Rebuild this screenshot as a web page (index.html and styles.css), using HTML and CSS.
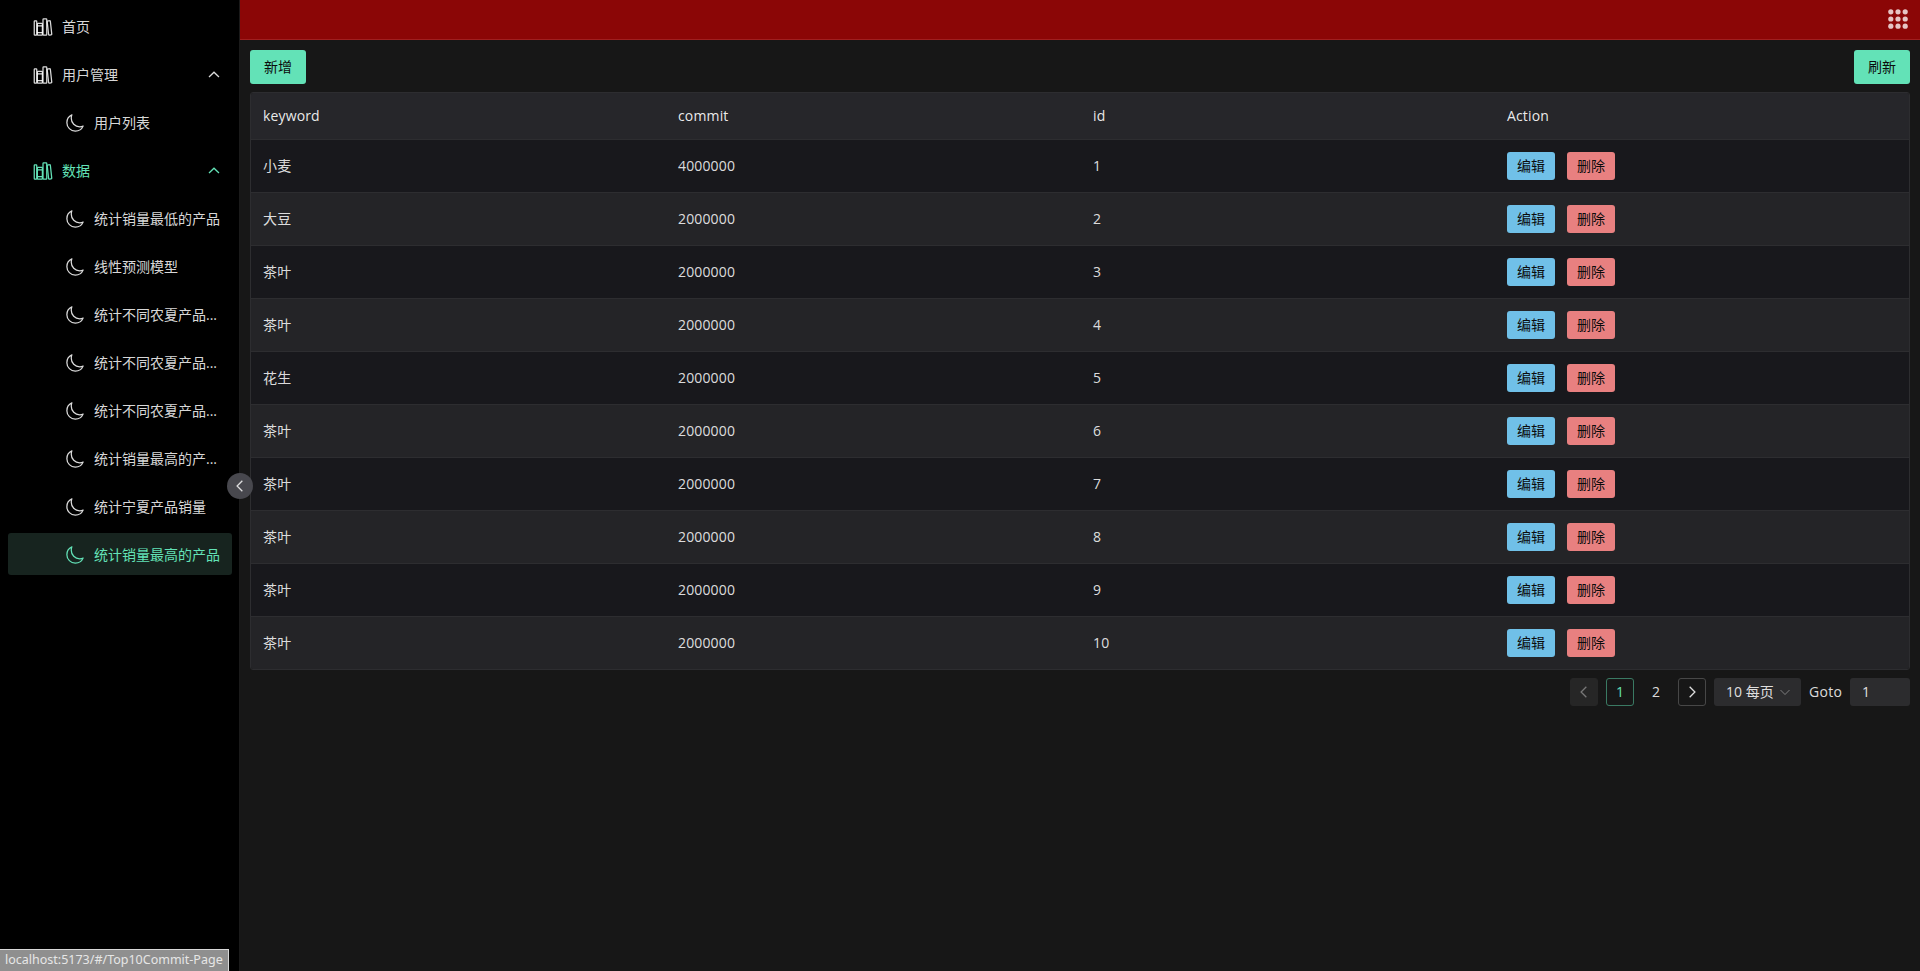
FILE: index.html
```html
<!DOCTYPE html>
<html lang="zh-CN">
<head>
<meta charset="utf-8">
<title>Top10Commit</title>
<link rel="stylesheet" href="styles.css">
</head>
<body>
<svg class="defs" width="0" height="0" aria-hidden="true">
  <symbol id="lib" viewBox="0 0 512 512">
    <rect x="32" y="96" width="64" height="368" rx="16" ry="16"/>
    <path d="M112 224h128M112 400h128"/>
    <rect x="112" y="160" width="128" height="304" rx="16" ry="16"/>
    <rect x="256" y="48" width="96" height="416" rx="16" ry="16"/>
    <path d="M422.46 96.11l-40.4 4.25c-11.12 1.17-19.18 11.57-17.93 23.1l34.92 321.59c1.26 11.53 11.37 20.15 22.49 19l40.4-4.25c11.12-1.17 19.18-11.57 17.93-23.1L445 115.11c-1.31-11.58-11.42-20.2-22.54-19z"/>
  </symbol>
  <symbol id="moon" viewBox="0 0 512 512">
    <path d="M160 136c0-30.62 4.51-61.61 16-88C99.57 81.27 48 159.32 48 248c0 119.29 96.71 216 216 216 88.68 0 166.73-51.57 200-128-26.39 11.49-57.38 16-88 16-119.29 0-216-96.71-216-216z"/>
  </symbol>
</svg>
<div class="app">
  <aside class="sidebar">
    <nav class="menu">
      <a class="item"><svg class="ic"><use href="#lib"/></svg><span class="label">首页</span></a>
      <a class="item"><svg class="ic"><use href="#lib"/></svg><span class="label">用户管理</span><svg class="chev" viewBox="0 0 12 12"><path d="M1 9 6 4.2 11 9"/></svg></a>
      <a class="item sub"><svg class="ic"><use href="#moon"/></svg><span class="label">用户列表</span></a>
      <a class="item open"><svg class="ic"><use href="#lib"/></svg><span class="label">数据</span><svg class="chev" viewBox="0 0 12 12"><path d="M1 9 6 4.2 11 9"/></svg></a>
      <a class="item sub"><svg class="ic"><use href="#moon"/></svg><span class="label">统计销量最低的产品</span></a>
      <a class="item sub"><svg class="ic"><use href="#moon"/></svg><span class="label">线性预测模型</span></a>
      <a class="item sub"><svg class="ic"><use href="#moon"/></svg><span class="label">统计不同农夏产品...</span></a>
      <a class="item sub"><svg class="ic"><use href="#moon"/></svg><span class="label">统计不同农夏产品...</span></a>
      <a class="item sub"><svg class="ic"><use href="#moon"/></svg><span class="label">统计不同农夏产品...</span></a>
      <a class="item sub"><svg class="ic"><use href="#moon"/></svg><span class="label">统计销量最高的产...</span></a>
      <a class="item sub"><svg class="ic"><use href="#moon"/></svg><span class="label">统计宁夏产品销量</span></a>
      <a class="item sub active"><svg class="ic"><use href="#moon"/></svg><span class="label">统计销量最高的产品</span></a>
    </nav>
    <button class="collapse" type="button" aria-label="收起"><svg viewBox="0 0 12 12"><path d="M8 1.5 3.5 6 8 10.5"/></svg></button>
  </aside>
  <div class="main">
    <header class="topbar">
      <svg class="apps" viewBox="0 0 20 20"><g><circle cx="2.8" cy="2.8" r="2.6"/><circle cx="10" cy="2.8" r="2.6"/><circle cx="17.2" cy="2.8" r="2.6"/><circle cx="2.8" cy="10" r="2.6"/><circle cx="10" cy="10" r="2.6"/><circle cx="17.2" cy="10" r="2.6"/><circle cx="2.8" cy="17.2" r="2.6"/><circle cx="10" cy="17.2" r="2.6"/><circle cx="17.2" cy="17.2" r="2.6"/></g></svg>
    </header>
    <section class="content">
      <div class="toolbar">
        <button class="btn btn-big" type="button">新增</button>
        <button class="btn btn-big" type="button">刷新</button>
      </div>
      <div class="table-wrap">
        <table class="table">
          <thead>
            <tr><th class="col-a">keyword</th><th class="col-a">commit</th><th class="col-b">id</th><th>Action</th></tr>
          </thead>
          <tbody>
            <tr><td>小麦</td><td>4000000</td><td>1</td><td class="td-action"><span class="actions"><button class="btn btn-edit" type="button">编辑</button><button class="btn btn-del" type="button">删除</button></span></td></tr>
            <tr><td>大豆</td><td>2000000</td><td>2</td><td class="td-action"><span class="actions"><button class="btn btn-edit" type="button">编辑</button><button class="btn btn-del" type="button">删除</button></span></td></tr>
            <tr><td>茶叶</td><td>2000000</td><td>3</td><td class="td-action"><span class="actions"><button class="btn btn-edit" type="button">编辑</button><button class="btn btn-del" type="button">删除</button></span></td></tr>
            <tr><td>茶叶</td><td>2000000</td><td>4</td><td class="td-action"><span class="actions"><button class="btn btn-edit" type="button">编辑</button><button class="btn btn-del" type="button">删除</button></span></td></tr>
            <tr><td>花生</td><td>2000000</td><td>5</td><td class="td-action"><span class="actions"><button class="btn btn-edit" type="button">编辑</button><button class="btn btn-del" type="button">删除</button></span></td></tr>
            <tr><td>茶叶</td><td>2000000</td><td>6</td><td class="td-action"><span class="actions"><button class="btn btn-edit" type="button">编辑</button><button class="btn btn-del" type="button">删除</button></span></td></tr>
            <tr><td>茶叶</td><td>2000000</td><td>7</td><td class="td-action"><span class="actions"><button class="btn btn-edit" type="button">编辑</button><button class="btn btn-del" type="button">删除</button></span></td></tr>
            <tr><td>茶叶</td><td>2000000</td><td>8</td><td class="td-action"><span class="actions"><button class="btn btn-edit" type="button">编辑</button><button class="btn btn-del" type="button">删除</button></span></td></tr>
            <tr><td>茶叶</td><td>2000000</td><td>9</td><td class="td-action"><span class="actions"><button class="btn btn-edit" type="button">编辑</button><button class="btn btn-del" type="button">删除</button></span></td></tr>
            <tr><td>茶叶</td><td>2000000</td><td>10</td><td class="td-action"><span class="actions"><button class="btn btn-edit" type="button">编辑</button><button class="btn btn-del" type="button">删除</button></span></td></tr>
          </tbody>
        </table>
      </div>
      <div class="pager">
        <span class="pg pg-disabled"><svg viewBox="0 0 12 12"><path d="M8 1.5 3.5 6 8 10.5"/></svg></span>
        <span class="pg pg-current">1</span>
        <span class="pg pg-plain">2</span>
        <span class="pg pg-next"><svg viewBox="0 0 12 12"><path d="M4 1.5 8.5 6 4 10.5"/></svg></span>
        <span class="pg-select">10 每页<svg viewBox="0 0 12 12"><path d="M1.5 4 6 8.5 10.5 4"/></svg></span>
        <span class="goto">Goto</span>
        <span class="pg-input">1</span>
      </div>
    </section>
  </div>
</div>
<div class="status">localhost:5173/#/Top10Commit-Page</div>
</body>
</html>
```
FILE: styles.css
```css
* { box-sizing: border-box; }
html, body { margin: 0; height: 100%; overflow: hidden; }
body {
  background: #171717;
  color: rgba(255, 255, 255, 0.86);
  font-family: "Open Sans", "Noto Sans CJK SC", sans-serif;
  font-size: 14px;
}
.defs { position: absolute; }
.app { display: flex; height: 971px; }

.sidebar {
  position: relative;
  flex: 0 0 240px;
  min-width: 0;
  background: #000;
  border-right: 1px solid #1a1a1a;
}
.menu { display: flex; flex-direction: column; gap: 6px; padding-top: 5px; }
.item {
  display: flex;
  align-items: center;
  height: 42px;
  margin: 0 7px 0 8px;
  padding-left: 24px;
  border-radius: 3px;
  color: rgba(255, 255, 255, 0.86);
  white-space: nowrap;
}
.item.sub { padding-left: 56px; padding-right: 12px; }
.ic {
  flex: none;
  width: 20px;
  height: 20px;
  margin: 2px 9px 0 1px;
  fill: none;
  stroke: currentColor;
  stroke-width: 32;
  stroke-linejoin: round;
  stroke-linecap: round;
}
.label { flex: 1; min-width: 0; line-height: 20px; padding-top: 1px; }
.chev {
  flex: none;
  width: 12px;
  height: 12px;
  margin-right: 12px;
  fill: none;
  stroke: currentColor;
  stroke-width: 1.3;
}
.open { color: #63e2b7; }
.active { color: #63e2b7; background: #17241f; }

.collapse {
  position: absolute;
  top: 473px;
  left: 227px;
  width: 26px;
  height: 26px;
  padding: 0;
  border: 0;
  border-radius: 50%;
  background: #48484e;
  display: flex;
  align-items: center;
  justify-content: center;
}
.collapse svg { width: 14px; height: 14px; fill: none; stroke: rgba(255, 255, 255, 0.82); stroke-width: 1.1; }

.main { flex: 1; min-width: 0; display: flex; flex-direction: column; }
.topbar {
  height: 40px;
  flex: none;
  background: #8b0606;
  border-bottom: 1px solid #a01f1f;
  display: flex;
  align-items: center;
  justify-content: flex-end;
  padding-right: 12px;
}
.apps { width: 20px; height: 20px; fill: #e6c4c4; margin-bottom: 1px; }

.content { padding: 10px; display: flex; flex-direction: column; }
.toolbar { display: flex; justify-content: space-between; margin-bottom: 8px; }

.btn {
  border: 0;
  border-radius: 3px;
  padding: 0 0 2px;
  color: #0c0c0c;
  font: inherit;
  display: inline-flex;
  align-items: center;
  justify-content: center;
}
.btn-big { width: 56px; height: 34px; background: #63e2b7; }
.btn-edit { width: 48px; height: 28px; background: #70c0e8; }
.btn-del { width: 48px; height: 28px; background: #e88080; }
.actions { display: flex; gap: 12px; }

.table-wrap {
  border: 1px solid #2d2d30;
  border-radius: 3px;
  overflow: hidden;
}
.table { width: 100%; border-collapse: separate; border-spacing: 0; table-layout: fixed; letter-spacing: 0.15px; }
.table th {
  height: 47px;
  padding: 0 12px 2px;
  text-align: left;
  font-weight: 400;
  color: rgba(255, 255, 255, 0.92);
  background: #26262a;
  border-bottom: 1px solid #2d2d30;
}
.table th.col-a { width: 415px; }
.table th.col-b { width: 414px; }
.table td {
  height: 53px;
  padding: 0 12px 2px;
  color: rgba(255, 255, 255, 0.86);
  border-bottom: 1px solid #2d2d30;
}
.table td.td-action { padding-bottom: 0; }
.table tbody tr:nth-child(odd) td { background: #18181c; }
.table tbody tr:nth-child(even) td { background: #242427; }
.table tbody tr:last-child td { border-bottom: 0; height: 52px; }

.pager { display: flex; justify-content: flex-end; align-items: center; gap: 8px; margin-top: 8px; height: 28px; }
.pg {
  width: 28px;
  height: 28px;
  border-radius: 3px;
  display: flex;
  align-items: center;
  justify-content: center;
  border: 1px solid transparent;
}
.pg svg { width: 14px; height: 14px; fill: none; stroke: currentColor; stroke-width: 1.1; }
.pg-disabled { background: #262626; border-color: #262626; color: rgba(255, 255, 255, 0.38); }
.pg-current { color: #63e2b7; border-color: #3a7a63; padding-bottom: 2px; }
.pg-plain { padding-bottom: 2px; }
.pg-next { border-color: #474747; }
.pg-select {
  width: 87px;
  height: 28px;
  padding: 0 10px 2px 12px;
  border-radius: 3px;
  background: #2c2c2e;
  display: flex;
  align-items: center;
  justify-content: space-between;
}
.pg-select svg { width: 12px; height: 12px; margin-top: 2px; fill: none; stroke: rgba(255, 255, 255, 0.38); stroke-width: 1; }
.goto { width: 33px; padding-bottom: 2px; white-space: nowrap; letter-spacing: 0.3px; }
.pg-input {
  width: 60px;
  height: 28px;
  padding: 0 0 2px 12px;
  border-radius: 3px;
  background: #2c2c2e;
  display: flex;
  align-items: center;
}

.status {
  position: fixed;
  left: 0;
  bottom: 0;
  width: 229px;
  height: 22px;
  padding: 1px 0 0 5px;
  background: #8f8f8f;
  border-top: 1px solid #d8d8d8;
  border-right: 1px solid #d8d8d8;
  color: #e6e6e6;
  font-family: "Noto Sans", sans-serif;
  font-size: 12.5px;
  line-height: 18px;
  white-space: nowrap;
}
```
